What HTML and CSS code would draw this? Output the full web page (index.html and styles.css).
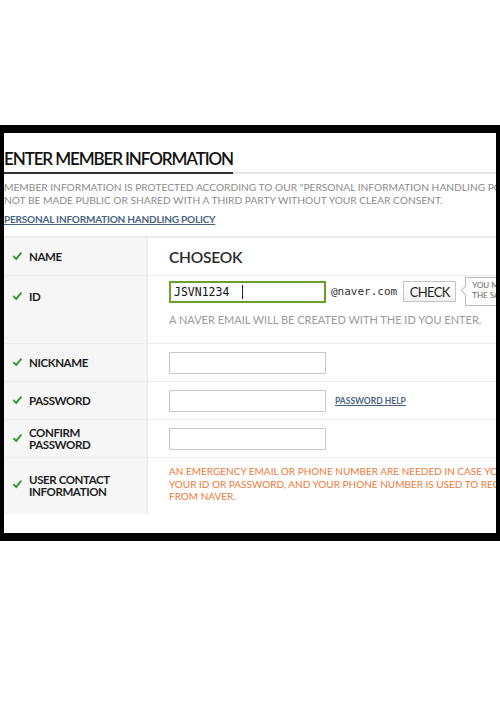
FILE: index.html
```html
<!DOCTYPE html>
<html lang="en">
<head>
    <meta charset="UTF-8">
    <meta name="viewport" content="width=device-width, initial-scale=1.0">
    <title>Enter Member Information</title>
    <link rel="stylesheet" href="styles.css">
</head>
<body>

<!-- Screen frame -->
<div class="frame">
    <div class="page">
        <div class="head">
            <h2>ENTER MEMBER INFORMATION</h2>
        </div>
        <p class="desc">MEMBER INFORMATION IS PROTECTED ACCORDING TO OUR "PERSONAL INFORMATION HANDLING POLICY" AND WILL<br>NOT BE MADE PUBLIC OR SHARED WITH A THIRD PARTY WITHOUT YOUR CLEAR CONSENT.</p>
        <div class="policy"><a href="#">PERSONAL INFORMATION HANDLING POLICY</a></div>

        <div class="form">
            <div class="row row-name">
                <div class="label"><span class="check"></span>NAME</div>
                <div class="field"><span class="name-value">CHOSEOK</span></div>
            </div>
            <div class="row row-id">
                <div class="label label-top"><span class="check"></span>ID</div>
                <div class="field field-id">
                    <div class="id-line">
                        <div class="input input-active">JSVN1234 <span class="caret"></span></div>
                        <span class="domain">@naver.com</span>
                        <button type="button" class="btn-check">CHECK</button>
                        <div class="tip">YOU MAY USE THE ID<br>THE SAME AS BEFORE</div>
                    </div>
                    <div class="hint">A NAVER EMAIL WILL BE CREATED WITH THE ID YOU ENTER.</div>
                </div>
            </div>
            <div class="row">
                <div class="label"><span class="check"></span>NICKNAME</div>
                <div class="field"><div class="input"></div></div>
            </div>
            <div class="row">
                <div class="label"><span class="check"></span>PASSWORD</div>
                <div class="field"><div class="input"></div><a href="#" class="help">PASSWORD HELP</a></div>
            </div>
            <div class="row">
                <div class="label"><span class="check"></span><span>CONFIRM<br>PASSWORD</span></div>
                <div class="field"><div class="input"></div></div>
            </div>
            <div class="row row-contact">
                <div class="label label-contact"><span class="check"></span><span>USER CONTACT<br>INFORMATION</span></div>
                <div class="field field-top">
                    <p class="warn">AN EMERGENCY EMAIL OR PHONE NUMBER ARE NEEDED IN CASE YOU NEED TO FIND<br>YOUR ID OR PASSWORD, AND YOUR PHONE NUMBER IS USED TO RECEIVE NOTICES<br>FROM NAVER.</p>
                </div>
            </div>
        </div>
    </div>
</div>

</body>
</html>
```

FILE: styles.css
```css
body {
    margin: 0;
    background-color: #fff;
    font-family: Lato, "Open Sans", sans-serif;
}

/* Black screen frame */
.frame {
    margin-top: 125px;
    height: 416px;
    box-sizing: border-box;
    border-style: solid;
    border-color: #000;
    border-width: 8px 4px 8px 4px;
    overflow: hidden;
    background: #fff;
}
.page {
    width: 640px;
}

/* Title */
.head {
    padding-top: 14px;
    border-bottom: 2px solid #e6e6e6;
}
.head h2 {
    display: inline-block;
    margin: 0 0 -2px 0;
    padding-bottom: 1px;
    font-size: 17px;
    line-height: 24px;
    font-weight: 600;
    letter-spacing: -1.1px;
    color: #111;
    border-bottom: 2px solid #333;
}
.desc {
    margin: 7px 0 0 0;
    font-size: 10.2px;
    line-height: 13px;
    color: #8c8c8c;
}
.policy {
    padding: 3px 0 10px 0;
    border-bottom: 2px solid #ebebeb;
    line-height: 14px;
}
.policy a {
    font-size: 10px;
    font-weight: 700;
    color: #4a6383;
    letter-spacing: -0.2px;
}

/* Form table */
.row {
    display: flex;
    height: 37px;
    border-bottom: 1px solid #ededed;
}
.row-id {
    height: 67px;
}
.row-contact {
    height: 56px;
    border-bottom: none;
}
.label {
    width: 144px;
    flex-shrink: 0;
    box-sizing: border-box;
    padding-left: 9px;
    background-color: #f6f6f7;
    border-right: 1px solid #e6e6e6;
    display: flex;
    align-items: center;
    font-size: 11.5px;
    font-weight: 700;
    line-height: 11.5px;
    color: #1e1e1e;
    letter-spacing: -0.4px;
}
.label-top {
    align-items: flex-start;
    padding-top: 15px;
}
.label-top .check {
    margin-top: 3px;
}
.label-contact {
    align-items: flex-start;
    padding-top: 16px;
}
.label-contact .check {
    margin-top: 8px;
}
.check {
    margin-right: 7px;
    flex-shrink: 0;
    border-left: 2px solid #3f9a3a;
    border-bottom: 2px solid #3f9a3a;
    box-sizing: border-box;
    width: 9px;
    height: 5px;
    transform: rotate(-50deg) translate(1px, -1px);
}
.field {
    flex: 1;
    display: flex;
    align-items: center;
    padding-left: 21px;
}
.field-id {
    flex-direction: column;
    align-items: flex-start;
    justify-content: flex-start;
    padding-top: 1px;
}
.field-top {
    align-items: flex-start;
    padding-top: 7px;
}
.name-value {
    font-size: 15.5px;
    font-weight: 600;
    color: #2a2a2a;
    letter-spacing: -0.2px;
}
.input {
    width: 155px;
    height: 20px;
    border: 1px solid #c8c8c8;
    background: #fff;
}
.id-line {
    display: flex;
    align-items: center;
}
.input-active {
    width: 153px;
    height: 18px;
    border: 2px solid #6aa02c;
    box-sizing: content-box;
    font-family: "DejaVu Sans Mono", monospace;
    font-size: 11.5px;
    line-height: 18px;
    text-indent: 3px;
    color: #111;
    display: flex;
    align-items: center;
}
.caret {
    display: inline-block;
    width: 1px;
    height: 14px;
    background: #222;
    margin-left: 13px;
}
.domain {
    margin-left: 5px;
    font-family: "DejaVu Sans Mono", monospace;
    font-size: 11px;
    color: #333;
}
.btn-check {
    margin-left: 6px;
    height: 21px;
    width: 53px;
    padding: 0;
    border: 1px solid #c4c4c4;
    background: linear-gradient(#fff, #f2f2f2);
    font-family: Lato, sans-serif;
    font-size: 13px;
    letter-spacing: -0.6px;
    color: #222;
}
.tip {
    position: relative;
    margin-left: 9px;
    height: 29px;
    padding: 2px 0 0 6px;
    box-sizing: border-box;
    border: 1px solid #bbb;
    font-size: 8px;
    line-height: 10px;
    color: #666;
    white-space: nowrap;
    width: 90px;
}
.tip::before {
    content: "";
    position: absolute;
    left: -4px;
    top: 9px;
    width: 6px;
    height: 6px;
    background: #fff;
    border-left: 1px solid #bbb;
    border-bottom: 1px solid #bbb;
    transform: rotate(45deg);
}
.hint {
    margin-top: 7px;
    font-size: 11px;
    line-height: 13px;
    color: #9a9a9a;
}
.help {
    margin-left: 9px;
    font-size: 8.5px;
    font-weight: 700;
    color: #4a6383;
}
.warn {
    margin: 0;
    font-size: 10px;
    line-height: 12.5px;
    color: #f07a38;
}
```
